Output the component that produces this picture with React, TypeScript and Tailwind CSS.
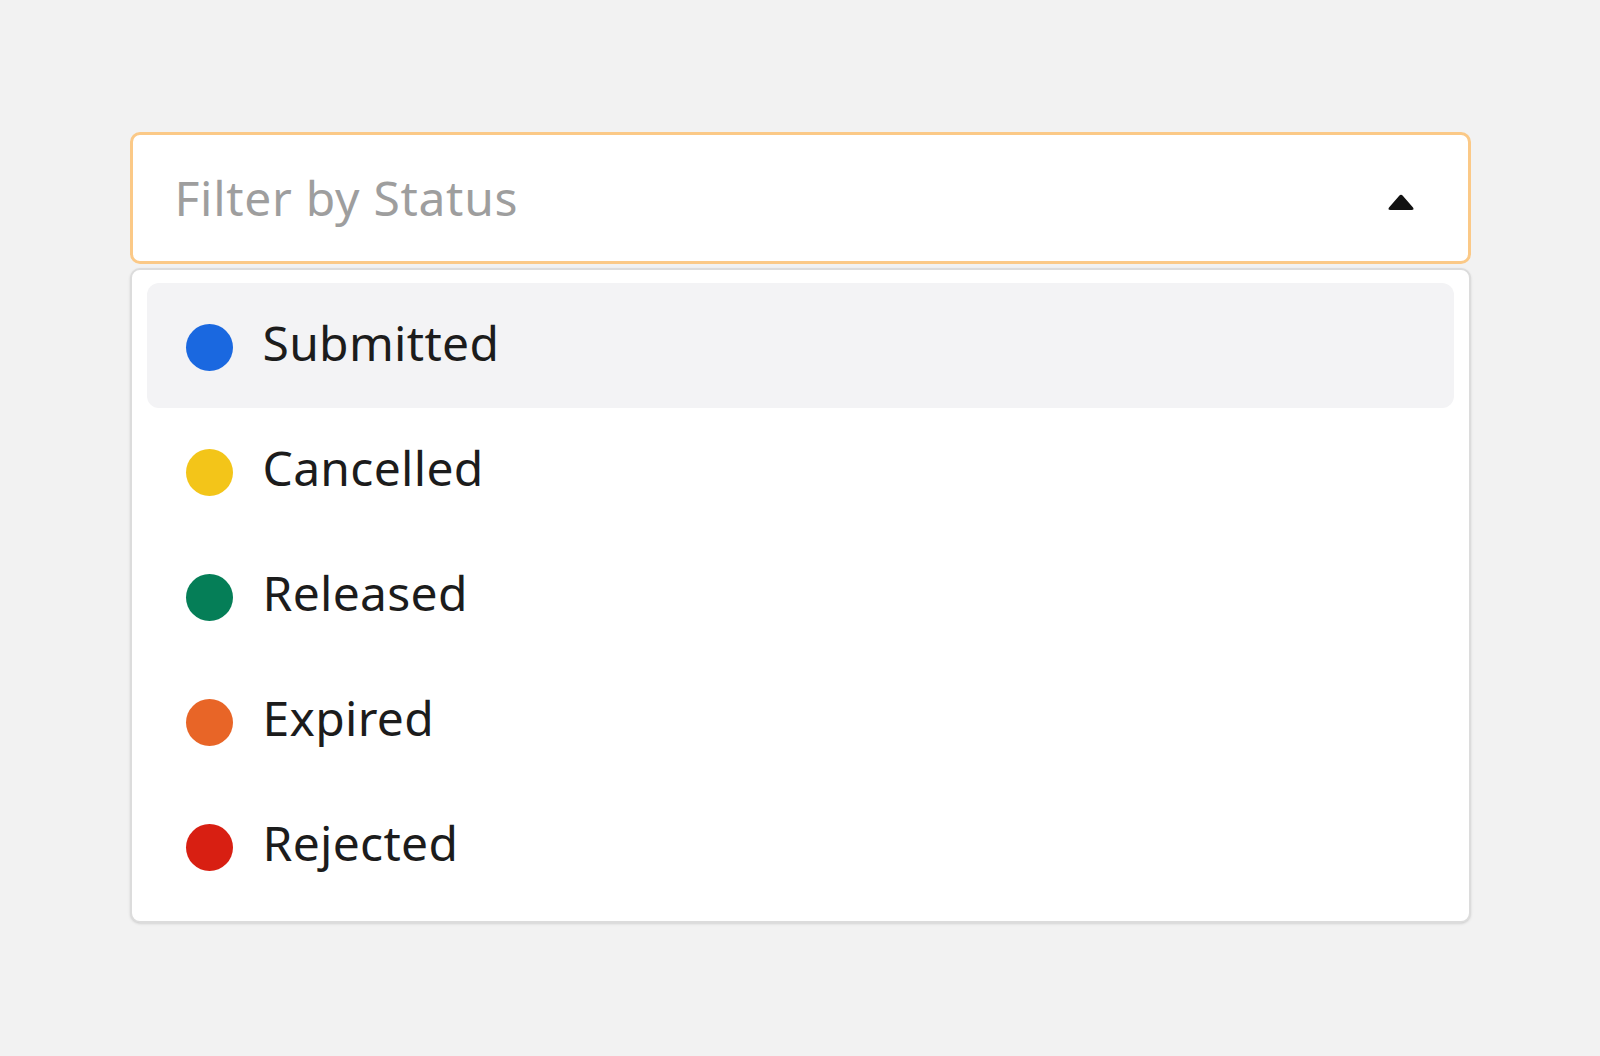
const statuses = [
  { label: 'Submitted', color: 'bg-[#1a68e0]', active: true },
  { label: 'Cancelled', color: 'bg-[#f3c519]', active: false },
  { label: 'Released', color: 'bg-[#057e57]', active: false },
  { label: 'Expired', color: 'bg-[#e86527]', active: false },
  { label: 'Rejected', color: 'bg-[#d81f12]', active: false },
];

export default function App() {
  return (
    <div
      className="min-h-[1056px] w-full bg-[#f2f2f2] pt-[132px]"
      style={{ fontFamily: '"Noto Sans", "Open Sans", sans-serif' }}
    >
      <div className="mx-auto w-[1341px]">
        {/* Trigger */}
        <div className="flex h-[132px] items-center justify-between rounded-[10px] border-[3px] border-[#fbc987] bg-white pl-[42px] pr-[52px]">
          <span className="text-[48px] leading-none tracking-[0.7px] text-[#9e9e9e]">Filter by Status</span>
          <svg width="30" height="20" viewBox="0 0 30 20" className="mt-[10px]">
            <path
              d="M13 3 Q15 0.5 17 3 L27 14.5 Q28.5 17 25.5 17 L4.5 17 Q1.5 17 3 14.5 Z"
              fill="#121212"
            />
          </svg>
        </div>

        {/* Options */}
        <div className="mt-[4px] rounded-[10px] border-2 border-[#dcdcdc] bg-white px-[15px] py-[13px] shadow-sm">
          {statuses.map((s) => (
            <div
              key={s.label}
              className={`flex h-[125px] items-center gap-[30px] rounded-[12px] pl-[39px] ${s.active ? 'bg-[#f3f3f5]' : ''}`}
            >
              <span className={`mt-[4px] h-[47px] w-[47px] shrink-0 rounded-full ${s.color}`} />
              <span className="mb-[6px] text-[48px] leading-none tracking-[0.3px] text-[#1c1c1c]">{s.label}</span>
            </div>
          ))}
        </div>
      </div>
    </div>
  );
}
